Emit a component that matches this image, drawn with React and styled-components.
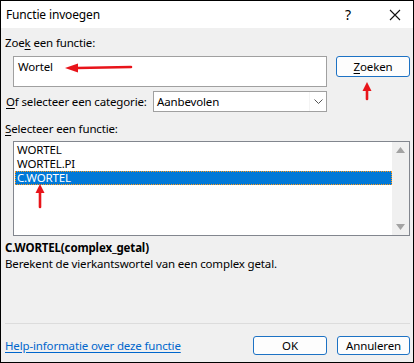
import React from "react";
import styled, { createGlobalStyle } from "styled-components";

const Global = createGlobalStyle`
  html, body { margin: 0; padding: 0; background: #fff; }
  * { box-sizing: border-box; }
`;

const Window = styled.div`
  position: relative;
  width: 414px;
  height: 363px;
  border: 1px solid #000;
  display: flex;
  flex-direction: column;
  font-family: "Noto Sans", "Open Sans", sans-serif;
  font-size: 11.5px;
  letter-spacing: -0.15px;
  color: #000;
  background: #f0f0f0;
  overflow: hidden;
`;

const TitleBar = styled.div`
  height: 27px;
  background: #fff;
  display: flex;
  align-items: center;
  padding-left: 5px;
  flex-shrink: 0;
`;

const Title = styled.div`
  flex: 1;
  font-size: 12px;
`;

const TitleButton = styled.div`
  width: ${(p) => p.$w}px;
  text-align: center;
  font-size: ${(p) => p.$fs}px;
  line-height: 27px;
  display: flex;
  align-items: center;
  justify-content: center;
`;

const Body = styled.div`
  flex: 1;
  display: flex;
  flex-direction: column;
  padding: 7px 3px 0 4px;
`;

const Label = styled.div`
  height: 15px;
  line-height: 15px;
  white-space: nowrap;
  margin-top: ${(p) => p.$mt || 0}px;
  u { text-decoration: underline; text-underline-offset: 2px; }
`;

const Row = styled.div`
  display: flex;
  align-items: ${(p) => p.$align || "flex-start"};
  margin-top: ${(p) => p.$mt || 0}px;
  padding-left: ${(p) => p.$pl || 0}px;
`;

const SearchBox = styled.div`
  width: 314px;
  height: 31px;
  background: #fff;
  border: 1px solid #a0a0a0;
  padding: 3px 4px;
  line-height: 14px;
`;

const Button = styled.div`
  width: ${(p) => p.$w || 74}px;
  height: ${(p) => p.$h || 21}px;
  margin-left: ${(p) => p.$ml || 0}px;
  border: 1px solid #1d72c4;
  border-radius: 3px;
  background: #fdfdfd;
  display: flex;
  align-items: center;
  justify-content: center;
  u { text-decoration: underline; text-underline-offset: 2px; }
`;

const CategoryLabel = styled.div`
  width: 148px;
  padding-left: 1px;
  white-space: nowrap;
  u { text-decoration: underline; text-underline-offset: 2px; }
`;

const Select = styled.div`
  width: 174px;
  height: 21px;
  background: #fff;
  border: 1px solid #a0a0a0;
  display: flex;
  align-items: center;
  padding-left: 3px;
`;

const SelectText = styled.div`
  flex: 1;
`;

const SelectArrow = styled.div`
  width: 17px;
  height: 19px;
  display: flex;
  align-items: center;
  justify-content: center;
  border-left: 1px solid #f4f4f4;
`;

const ListBox = styled.div`
  margin-left: 8px;
  width: 398px;
  height: 95px;
  background: #fff;
  border: 1px solid #82868e;
  display: flex;
`;

const ListItems = styled.div`
  flex: 1;
  padding: 1px 0 0 1px;
`;

const Item = styled.div`
  height: 14px;
  line-height: 14px;
  padding-left: 2px;
  background: ${(p) => (p.$sel ? "#0078d7" : "transparent")};
  color: ${(p) => (p.$sel ? "#fff" : "#000")};
  outline: ${(p) => (p.$sel ? "1px dotted #ff9a1a" : "none")};
  outline-offset: -1px;
`;

const ScrollBar = styled.div`
  width: 17px;
  background: #f0f0f0;
  display: flex;
  flex-direction: column;
  justify-content: space-between;
  align-items: center;
  padding: 5px 0 5px;
`;

const Description = styled.div`
  margin-top: 4px;
  line-height: 16px;
`;

const Bold = styled.div`
  font-weight: 700;
`;

const Spacer = styled.div`
  flex: 1;
`;

const Separator = styled.div`
  height: 1px;
  background: #dcdcdc;
`;

const Footer = styled.div`
  height: 38px;
  display: flex;
  align-items: center;
  padding-top: 4px;
`;

const HelpLink = styled.a`
  flex: 1;
  color: #0066cc;
  text-decoration: underline;
  text-underline-offset: 2px;
  cursor: pointer;
`;

const Arrow = styled.svg`
  position: absolute;
  left: ${(p) => p.$x}px;
  top: ${(p) => p.$y}px;
  overflow: visible;
`;

export default function App() {
  return (
    <>
      <Global />
      <Window>
        <TitleBar>
          <Title>Functie invoegen</Title>
          <TitleButton $w={58} $fs={14}>?</TitleButton>
          <TitleButton $w={36} $fs={16}>
            <svg width="12" height="12" viewBox="0 0 12 12">
              <path d="M1 1 L11 11 M11 1 L1 11" stroke="#111" strokeWidth="1.1" />
            </svg>
          </TitleButton>
        </TitleBar>
        <Body>
          <Label>
            Zoe<u>k</u> een functie:
          </Label>
          <Row $mt={6} $pl={8}>
            <SearchBox>Wortel</SearchBox>
            <Button $ml={9}>
              <span>
                <u>Z</u>oeken
              </span>
            </Button>
          </Row>
          <Row $mt={4} $align="center">
            <CategoryLabel>
              <u>O</u>f selecteer een categorie:
            </CategoryLabel>
            <Select>
              <SelectText>Aanbevolen</SelectText>
              <SelectArrow>
                <svg width="9" height="5" viewBox="0 0 9 5">
                  <path d="M0.5 0.5 L4.5 4.5 L8.5 0.5" fill="none" stroke="#555" strokeWidth="1" />
                </svg>
              </SelectArrow>
            </Select>
          </Row>
          <Label $mt={9}>
            <u>S</u>electeer een functie:
          </Label>
          <Row $mt={5}>
            <ListBox>
              <ListItems>
                <Item>WORTEL</Item>
                <Item>WORTEL.PI</Item>
                <Item $sel>C.WORTEL</Item>
              </ListItems>
              <ScrollBar>
                <svg width="9" height="6" viewBox="0 0 9 6">
                  <path d="M0 6 L4.5 0 L9 6 Z" fill="#a3a3a3" />
                </svg>
                <svg width="9" height="6" viewBox="0 0 9 6">
                  <path d="M0 0 L4.5 6 L9 0 Z" fill="#a3a3a3" />
                </svg>
              </ScrollBar>
            </ListBox>
          </Row>
          <Description>
            <Bold>C.WORTEL(complex_getal)</Bold>
            <div>Berekent de vierkantswortel van een complex getal.</div>
          </Description>
          <Spacer />
          <Separator />
          <Footer>
            <HelpLink>Help-informatie over deze functie</HelpLink>
            <Button $w={74} $h={19}>OK</Button>
            <Button $w={73} $h={19} $ml={10}>Annuleren</Button>
          </Footer>
        </Body>
        <Arrow $x={64} $y={61} width="68" height="12" viewBox="0 0 68 12">
          <path d="M12 6 L66 5" stroke="#e8141a" strokeWidth="2.6" strokeLinecap="round" />
          <path d="M0 6 L13 1.5 L13 10.5 Z" fill="#e8141a" />
        </Arrow>
        <Arrow $x={361} $y={81} width="10" height="18" viewBox="0 0 10 18">
          <path d="M5 8 L5 17" stroke="#e8141a" strokeWidth="2.6" strokeLinecap="round" />
          <path d="M5 0 L9.5 9 L0.5 9 Z" fill="#e8141a" />
        </Arrow>
        <Arrow $x={34} $y={183} width="10" height="24" viewBox="0 0 10 24">
          <path d="M5 8 L5 23" stroke="#e8141a" strokeWidth="2.6" strokeLinecap="round" />
          <path d="M5 0 L9.5 9 L0.5 9 Z" fill="#e8141a" />
        </Arrow>
      </Window>
    </>
  );
}
